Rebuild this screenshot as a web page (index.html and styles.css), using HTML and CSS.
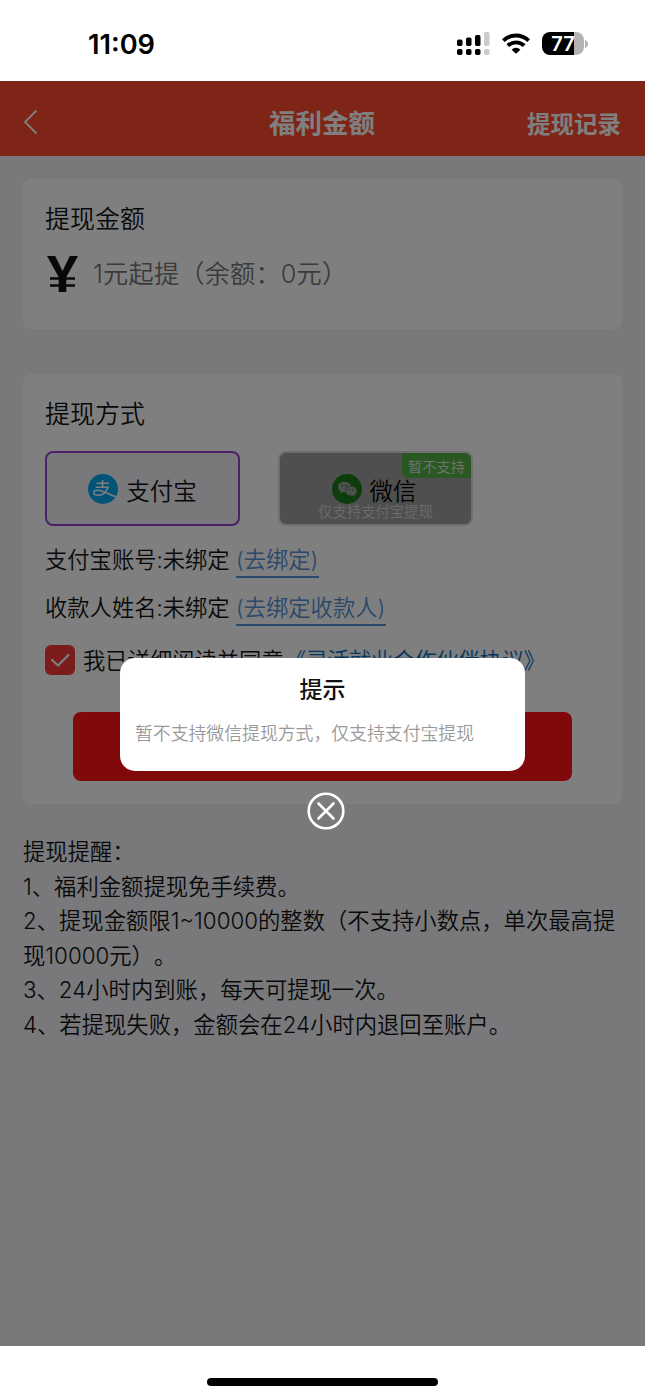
FILE: index.html
```html
<!DOCTYPE html>
<html lang="zh-CN">
<head>
<meta charset="utf-8">
<title>福利金额</title>
<link rel="stylesheet" href="styles.css">
</head>
<body>
<div class="status">
  <div class="time">11:09</div>
  <svg class="signal" width="34" height="24" viewBox="0 0 34 24">
    <g fill="#000"><rect x="1" y="7.500" width="5.500" height="6.500" rx="1.700"/><rect x="10" y="5.500" width="5.500" height="8.500" rx="1.700"/><rect x="19" y="3" width="5.500" height="11" rx="1.700"/><rect x="1" y="17" width="5.500" height="6" rx="1.700"/><rect x="10" y="17" width="5.500" height="6" rx="1.700"/><rect x="19" y="17" width="5.500" height="6" rx="1.700"/></g>
    <g fill="#ccc"><rect x="28" y="0" width="5.500" height="14" rx="1.700"/><rect x="28" y="17" width="5.500" height="6" rx="1.700"/></g>
  </svg>
  <svg class="wifi" width="28" height="21" viewBox="0 0 28 21">
    <g fill="none" stroke="#000" stroke-width="3.900"><path d="M1.300 7.600A18.300 18.300 0 0 1 26.700 7.600"/><path d="M5.800 12.700A11.800 11.800 0 0 1 22.200 12.700"/></g>
    <path d="M14 20.800L9.600 16.700A6 6 0 0 1 18.400 16.700Z"/>
  </svg>
  <div class="battery"><div class="cell">77</div><svg width="3" height="8" viewBox="0 0 3 8"><path d="M0 0Q3 1 3 4T0 8Z" fill="#b3b3b3"/></svg></div>
</div>
<div class="app">
  <header class="nav">
    <svg class="back" width="16" height="28" viewBox="0 0 16 28"><path d="M13.500 2.500L2 14L13.500 25.500" fill="none" stroke="#fff" stroke-width="1.800"/></svg>
    <h1>福利金额</h1>
    <span class="record">提现记录</span>
  </header>
  <main>
    <section class="card amount">
      <h2>提现金额</h2>
      <div class="amount-row"><svg width="31" height="36" viewBox="0 0 31 36"><path d="M0 0H8.200L15.500 15L22.800 0H31L19.300 21V36H11.700V21ZM3 21.300H28V23.700H3ZM3 28.300H28V30.700H3Z" fill="#111"/></svg><span class="hint">1元起提（余额：0元）</span></div>
    </section>
    <section class="card method">
      <h2>提现方式</h2>
      <div class="options">
        <div class="option alipay">
          <svg width="30" height="30" viewBox="0 0 30 30"><circle cx="15" cy="15" r="15" fill="#02a9f1"/><g fill="none" stroke="#fff" stroke-width="1.600"><path d="M8.500 9.200H21M14.600 6V13M7.700 13.200H20C18.500 17 15 21.300 10.300 21.300C7.300 21.300 5.700 20 5.700 18.500C5.700 17 7.300 16.200 9.500 16.200C14.500 16.200 20 20 28 22.800"/></g></svg>
          <span>支付宝</span>
        </div>
        <div class="option wechat">
          <svg width="30" height="30" viewBox="0 0 30 30"><circle cx="15" cy="15" r="15" fill="#1b7a18"/><path d="M12.300 7.700C8.700 7.700 6 10 6 13C6 14.800 7 16.200 8.500 17.200L8 19.300L10.500 18.100L13.200 18.400C12.500 14.500 15.500 11.700 19 11.700C18.200 9.300 15.500 7.700 12.300 7.700Z" fill="#a0a0a0"/><path d="M19 12.500C22.200 12.500 24.700 14.600 24.700 17.100C24.700 18.700 23.800 20 22.600 20.900L23 22.600L20.900 21.500C17.200 22.200 13.500 20.200 13.500 17.100C13.500 14.600 15.900 12.500 19 12.500Z" fill="#a0a0a0"/><g fill="#1b7a18"><circle cx="10.200" cy="11.500" r=".9"/><circle cx="14.300" cy="11.500" r=".9"/><circle cx="17.200" cy="15.700" r=".8"/><circle cx="20.900" cy="15.700" r=".8"/></g></svg>
          <span>微信</span>
          <em>暂不支持</em>
          <small>仅支持支付宝提现</small>
        </div>
      </div>
      <p class="field">支付宝账号:未绑定 <a>(去绑定)</a></p>
      <p class="field">收款人姓名:未绑定 <a>(去绑定收款人)</a></p>
      <div class="agree">
        <svg width="30" height="30" viewBox="0 0 30 30"><rect width="30" height="30" rx="6" fill="#f73a3a"/><path d="M7 15L13 20.500L23.500 10" fill="none" stroke="#fff" stroke-width="2.200" stroke-linecap="round" stroke-linejoin="round"/></svg>
        <span>我已详细阅读并同意<b>《灵活就业合作伙伴协议》</b></span>
      </div>
      <div class="submit"></div>
    </section>
    <section class="notes">
      <p>提现提醒：</p>
      <p>1、福利金额提现免手续费。</p>
      <p>2、提现金额限1~10000的整数（不支持小数点，单次最高提<br>现10000元）。</p>
      <p>3、24小时内到账，每天可提现一次。</p>
      <p>4、若提现失败，金额会在24小时内退回至账户。</p>
    </section>
  </main>
  <div class="mask">
    <div class="dialog"><h3>提示</h3><p>暂不支持微信提现方式，仅支持支付宝提现</p></div>
    <svg class="close" width="38" height="38" viewBox="0 0 38 38"><g fill="none" stroke="#fff" stroke-width="2.600" stroke-linecap="round"><circle cx="19" cy="19" r="17.300"/><path d="M11.500 11.500L26.500 26.500M26.500 11.500L11.500 26.500"/></g></svg>
  </div>
</div>
<footer class="home"><div class="bar"></div></footer>
</body>
</html>
```

FILE: styles.css
```css
* { box-sizing: border-box; }
body { margin: 0; width: 645px; height: 1398px; overflow: hidden; background: #fff; color: #111; font-family: Inter, "Noto Sans CJK SC", sans-serif; font-weight: 360; text-spacing-trim: space-all; display: flex; flex-direction: column; }
h1, h2, h3, p { margin: 0; font-weight: inherit; white-space: nowrap; }
svg { display: block; flex: none; }
.status { height: 81px; flex: none; display: flex; align-items: flex-start; color: #000; }
.time { width: 369px; margin: 28px 0 0 88px; font-size: 27.200px; line-height: 34px; font-weight: 600; }
.signal { margin: 32px 0 0 -1px; }
.wifi { margin: 33px 0 0 12px; }
.battery { display: flex; align-items: center; gap: 1px; margin: 32px 0 0 12px; }
.cell { width: 42px; height: 23px; border-radius: 8px; background: linear-gradient(90deg, #000 32px, #b3b3b3 32px); color: #fff; font-size: 20px; line-height: 24px; font-weight: 600; text-align: center; }
.app { position: relative; flex: none; height: 1265px; background: #f2f2f7; }
.nav { height: 75px; padding: 3px 24px 0 23px; background: #fc4a2f; color: #fff; display: grid; grid-template-columns: 1fr auto 1fr; align-items: center; }
.back { margin-top: 3px; }
.nav h1 { font-size: 26.500px; font-weight: 700; margin-top: 3px; }
.record { justify-self: end; font-size: 23.500px; font-weight: 700; margin-top: 5px; }
main { padding: 23px 23px 0; }
.card { background: #fff; border-radius: 8px; padding: 0 22px; }
.card h2 { font-size: 25px; line-height: 36px; }
.amount { height: 150px; padding-top: 22px; }
.amount-row { display: flex; align-items: center; margin: 19px 0 0 2px; height: 36px; }
.hint { margin-left: 15px; font-size: 25.200px; letter-spacing: .2px; color: #757575; white-space: nowrap; line-height: 34px; margin-top: -1px; }
.method { height: 430px; margin-top: 45px; padding-top: 22px; }
.options { display: flex; gap: 38px; margin-top: 19px; }
.option { position: relative; width: 195px; height: 75px; display: flex; align-items: center; justify-content: center; gap: 8px; font-size: 23.500px; border-radius: 8px; }
.option > span { margin-top: 2px; }
.alipay { border: 2px solid #9b40cf; background: #f2f2f7; }
.wechat { background: #9f9f9f; border: 2px solid #dedede; color: #000; overflow: hidden; padding-right: 3px; }
.wechat em { position: absolute; right: 0; top: 0; width: 69px; height: 25px; border-radius: 0 6px 0 6px; background: #54b145; color: #e5e5e5; font-style: normal; font-size: 14.200px; line-height: 27px; text-align: center; }
.wechat small { position: absolute; left: 0; right: 0; bottom: 2px; font-size: 14.300px; line-height: 20px; text-align: center; color: #d6d6d6; }
.field { height: 34px; font-size: 22.300px; line-height: 34px; margin-top: 14px; }
.options + .field { margin-top: 17px; }
.field a { display: inline-block; line-height: 32px; color: #5291d4; border-bottom: 2px solid #5291d4; padding-right: 1px; }
.agree { display: flex; align-items: center; gap: 8px; margin-top: 18px; height: 34px; font-size: 22.300px; white-space: nowrap; }
.agree span { margin-top: -2px; }
.agree b { font-weight: inherit; letter-spacing: -.5px; color: #0a6fbd; }
.submit { width: 499px; height: 69px; margin: 35px 0 0 28px; border-radius: 8px; background: #ff1217; }
.notes { padding-top: 31px; font-size: 22.330px; line-height: 34.500px; }
.mask { position: absolute; inset: 0; background: rgba(0, 0, 0, .5); display: flex; flex-direction: column; align-items: center; padding-top: 577px; }
.dialog { width: 405px; height: 112.500px; border-radius: 15px; background: #fff; padding: 15px 15px 0; }
.dialog h3 { font-size: 23px; line-height: 34px; font-weight: 500; text-align: center; }
.dialog p { margin-top: 14px; font-size: 17.850px; line-height: 26px; color: #999; }
.close { margin: 21.500px 0 0 7px; }
.home { flex: 1; display: flex; justify-content: center; padding-top: 32px; }
.bar { width: 231px; height: 8px; border-radius: 4px; background: #000; }
```
